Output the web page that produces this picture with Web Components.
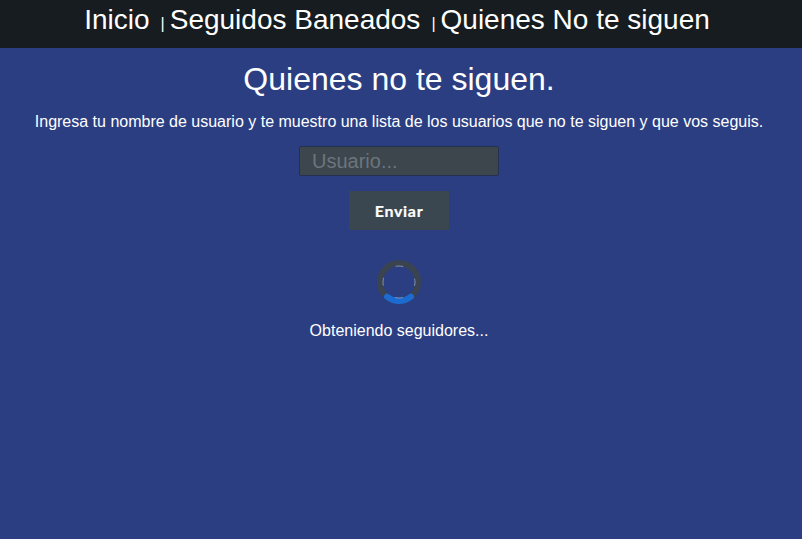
<!DOCTYPE html>
<html lang="es"><head><meta charset="utf-8"><title>Quienes no te siguen</title>
<style>
html,body{margin:0;padding:0;height:100%;background:#2b3e82;font-family:"Liberation Sans",Arial,sans-serif;color:#fff;overflow:hidden}
</style></head><body>
<app-nav>
<nav-link>Inicio</nav-link><nav-sep></nav-sep><nav-link>Seguidos Baneados</nav-link><nav-sep></nav-sep><nav-link>Quienes No te siguen</nav-link>
</app-nav>
<main-view>
<h-title>Quienes no te siguen.</h-title>
<p-text>Ingresa tu nombre de usuario y te muestro una lista de los usuarios que no te siguen y que vos seguis.</p-text>
<user-input></user-input>
<send-button>Enviar</send-button>
<load-spinner></load-spinner>
<p-status>Obteniendo seguidores...</p-status>
</main-view>
<script>
function def(name,html){customElements.define(name,class extends HTMLElement{constructor(){super();this.attachShadow({mode:'open'}).innerHTML=html}})}
def('app-nav',`<style>:host{display:flex;justify-content:center;align-items:flex-start;box-sizing:border-box;height:48px;background:#161c20;padding:0 8px 0 0;white-space:pre;font-size:28px;line-height:40px}</style><slot></slot>`);
def('nav-link',`<style>:host{display:block;color:#fff;cursor:pointer}</style><slot></slot>`);
def('nav-sep',`<style>:host{display:block;font-size:16px;margin:0 5px 0 11px;line-height:16px;padding-top:16px;color:#fff}</style>|`);
def('main-view',`<style>:host{display:flex;flex-direction:column;align-items:center;width:798px}</style><slot></slot>`);
def('h-title',`<style>:host{display:block;font-size:32px;line-height:37px;margin-top:13px}</style><slot></slot>`);
def('p-text',`<style>:host{display:block;font-size:16px;line-height:18px;margin-top:15px;white-space:nowrap}</style><slot></slot>`);
def('user-input',`<style>:host{display:block;margin-top:15px}input{display:block;box-sizing:border-box;width:200px;height:30px;margin:0;padding:0 12px;background:#3d464d;border:1px solid #252f4f;border-radius:2px;font:20px "Liberation Sans",Arial,sans-serif;color:#fff;outline:0}input::placeholder{color:#6c757d;opacity:1}</style><input placeholder="Usuario...">`);
def('send-button',`<style>:host{display:block;margin-top:15px}button{display:block;width:100px;height:39px;border:0;border-radius:0;background:#3a4650;color:#fff;font:700 16px Lato,sans-serif;letter-spacing:.7px;padding:0;-webkit-text-stroke:.2px #fff}</style><button><slot></slot></button>`);
def('load-spinner',`<style>:host{display:block;margin-top:29px;width:46px;height:46px}svg{display:block}</style><svg width="46" height="46" viewBox="0 0 46 46" fill="none"><circle cx="23" cy="23" r="19" stroke="#3a4350" stroke-width="6"/><path d="M11 37.700A19 19 0 0 0 35 37.700" stroke="#1b6bd0" stroke-width="6" stroke-linecap="round"/><circle cx="23" cy="23" r="16" stroke="#9aa3b8" stroke-width=".8" stroke-dasharray="8 17.130" stroke-dashoffset="4"/></svg>`);
def('p-status',`<style>:host{display:block;font-size:16px;line-height:18px;margin-top:17px}</style><slot></slot>`);
</script></body></html>
